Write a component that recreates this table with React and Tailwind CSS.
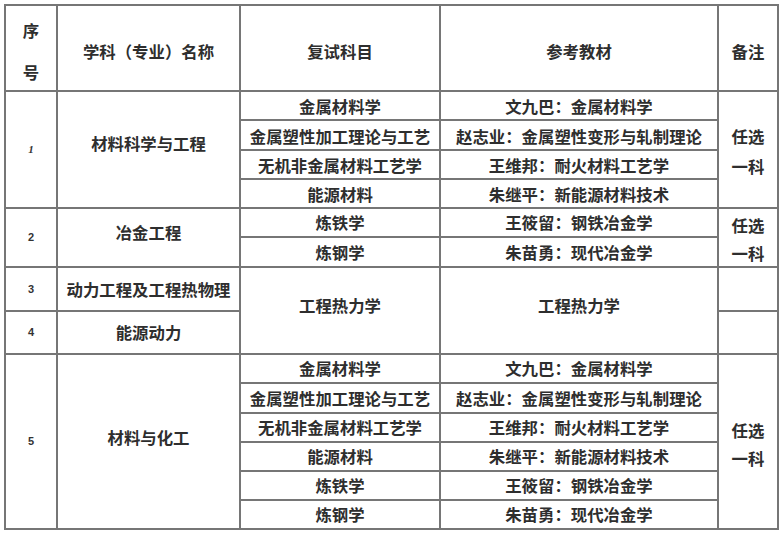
import React from 'react';

// 复试科目及参考教材一览表
const font = { fontFamily: '"Noto Sans CJK SC", "Noto Sans", sans-serif' };

const Cell = ({ className = '', children }) => (
  <div className={`bg-white flex items-center justify-center text-center ${className}`}>
    {children}
  </div>
);

const Num = ({ children, className = '' }) => (
  <span className={`text-[11px] font-bold text-[#333] font-['Liberation_Sans',sans-serif] ${className}`}>
    {children}
  </span>
);

const Note = ({ leading }) => (
  <div className={leading}>
    任选
    <br />
    一科
  </div>
);

const group1 = [
  ['金属材料学', '文九巴：金属材料学'],
  ['金属塑性加工理论与工艺', '赵志业：金属塑性变形与轧制理论'],
  ['无机非金属材料工艺学', '王维邦：耐火材料工艺学'],
  ['能源材料', '朱继平：新能源材料技术'],
];

const group2 = [
  ['炼铁学', '王筱留：钢铁冶金学'],
  ['炼钢学', '朱苗勇：现代冶金学'],
];

const group5 = [...group1, ...group2];

const App = () => {
  return (
    <div className="w-[783px] h-[534px] bg-white pt-[4px] pl-[4px]" style={font}>
      <div
        className="grid w-[775px] bg-[#767676] gap-[2px] p-[2px] text-[16.4px] font-bold text-[#2e2e2e]
          grid-cols-[50px_181px_198px_276px_58px]
          grid-rows-[84px_27px_28px_27px_27px_27px_28px_42px_41px_27px_28px_27px_27px_27px_27px]"
      >
        {/* header */}
        <Cell className="col-start-1 row-start-1">
          <div className="leading-[42px] pt-[5px]">
            序
            <br />
            号
          </div>
        </Cell>
        <Cell className="col-start-2 row-start-1 pt-[6px]">学科（专业）名称</Cell>
        <Cell className="col-start-3 row-start-1 pt-[6px]">复试科目</Cell>
        <Cell className="col-start-4 row-start-1 pt-[6px]">参考教材</Cell>
        <Cell className="col-start-5 row-start-1 pt-[6px]">备注</Cell>

        {/* 1 材料科学与工程 */}
        <Cell className="col-start-1 row-start-2 row-span-4">
          <Num className="italic font-['Liberation_Serif',serif]">1</Num>
        </Cell>
        <Cell className="col-start-2 row-start-2 row-span-4 pb-[12px]">材料科学与工程</Cell>
        {group1.map(([subject, book], i) => (
          <React.Fragment key={'a' + i}>
            <Cell className="col-start-3 pt-[2px]">{subject}</Cell>
            <Cell className="col-start-4 pt-[2px]">{book}</Cell>
          </React.Fragment>
        ))}
        <Cell className="col-start-5 row-start-2 row-span-4">
          <Note leading="leading-[30px] pt-[2px]" />
        </Cell>

        {/* 2 冶金工程 */}
        <Cell className="col-start-1 row-start-6 row-span-2">
          <Num>2</Num>
        </Cell>
        <Cell className="col-start-2 row-start-6 row-span-2 pb-[10px]">冶金工程</Cell>
        {group2.map(([subject, book], i) => (
          <React.Fragment key={'b' + i}>
            <Cell className={`col-start-3 ${i === 0 ? 'row-start-6' : 'row-start-7'}`}>{subject}</Cell>
            <Cell className={`col-start-4 ${i === 0 ? 'row-start-6' : 'row-start-7'}`}>{book}</Cell>
          </React.Fragment>
        ))}
        <Cell className="col-start-5 row-start-6 row-span-2">
          <Note leading="leading-[28px] pt-[2px]" />
        </Cell>

        {/* 3 / 4 */}
        <Cell className="col-start-1 row-start-8">
          <Num>3</Num>
        </Cell>
        <Cell className="col-start-2 row-start-8">动力工程及工程热物理</Cell>
        <Cell className="col-start-3 row-start-8 row-span-2 pb-[10px]">工程热力学</Cell>
        <Cell className="col-start-4 row-start-8 row-span-2 pb-[10px]">工程热力学</Cell>
        <Cell className="col-start-5 row-start-8" />
        <Cell className="col-start-1 row-start-9">
          <Num>4</Num>
        </Cell>
        <Cell className="col-start-2 row-start-9">能源动力</Cell>
        <Cell className="col-start-5 row-start-9" />

        {/* 5 材料与化工 */}
        <Cell className="col-start-1 row-start-10 row-span-6">
          <Num>5</Num>
        </Cell>
        <Cell className="col-start-2 row-start-10 row-span-6 pb-[8px]">材料与化工</Cell>
        {group5.map(([subject, book], i) => (
          <React.Fragment key={'c' + i}>
            <Cell className="col-start-3">{subject}</Cell>
            <Cell className="col-start-4">{book}</Cell>
          </React.Fragment>
        ))}
        <Cell className="col-start-5 row-start-10 row-span-6">
          <Note leading="leading-[28px] pt-[4px]" />
        </Cell>
      </div>
    </div>
  );
};

export default App;
